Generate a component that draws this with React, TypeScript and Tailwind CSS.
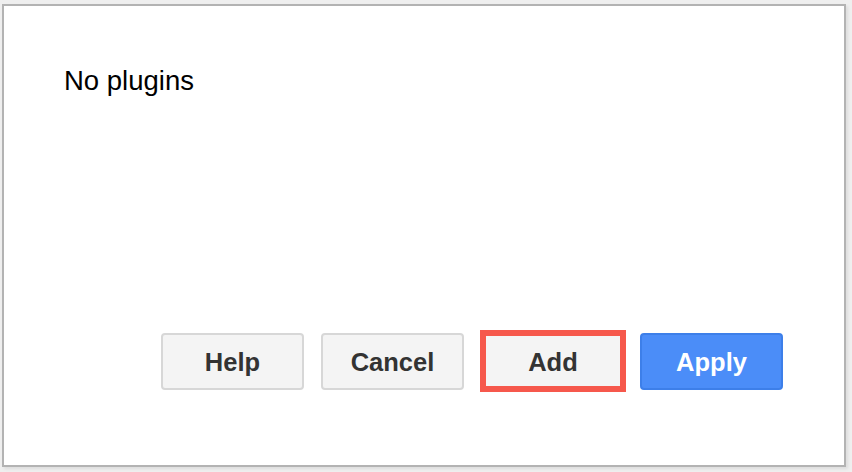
import React from "react";

export default function App() {
  const btn =
    "flex items-center justify-center h-[57px] w-[143px] pt-[3px] rounded-[4px] border-2 border-[#d7d7d7] bg-[#f4f4f4] text-[25.5px] font-bold text-[#333333]";
  return (
    <div
      className="w-[852px] h-[472px] bg-[#efefef] pt-[4px] pl-[2px]"
      style={{ fontFamily: '"Liberation Sans", Arial, sans-serif' }}
    >
      <div className="w-[844px] h-[463px] border-2 border-[#b3b3b3] bg-white flex flex-col shadow-[2px_2px_3px_rgba(0,0,0,0.08)]">
        <div className="pt-[59px] pl-[60px] text-[27.5px] text-black leading-[1.15]">
          No plugins
        </div>
        <div className="mt-auto pb-[73px] pr-[61px] flex items-center justify-end h-[135px]">
          <button className={btn}>Help</button>
          <button className={btn + " ml-[17px]"}>Cancel</button>
          <div className="ml-[16px] w-[146px] h-[62px] pt-[3px] border-[6px] border-[#f6584c] bg-[#f4f4f4] flex items-center justify-center text-[25.5px] font-bold text-[#333333]">
            Add
          </div>
          <button className="ml-[14px] flex items-center justify-center h-[57px] w-[143px] pt-[3px] rounded-[4px] border-2 border-[#3d7fe9] bg-[#4b8df8] text-[25.5px] font-bold text-white">
            Apply
          </button>
        </div>
      </div>
    </div>
  );
}
